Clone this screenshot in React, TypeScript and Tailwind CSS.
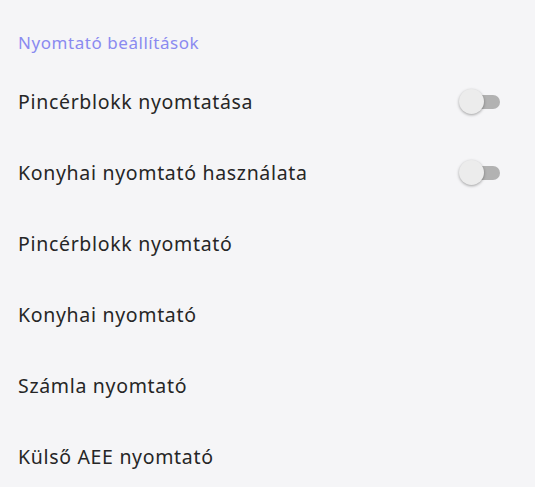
import { useState } from 'react'

interface PrefItem {
  title: string
  toggle?: boolean
}

const items: PrefItem[] = [
  { title: 'Pincérblokk nyomtatása', toggle: true },
  { title: 'Konyhai nyomtató használata', toggle: true },
  { title: 'Pincérblokk nyomtató' },
  { title: 'Konyhai nyomtató' },
  { title: 'Számla nyomtató' },
  { title: 'Külső AEE nyomtató' },
]

function Switch({ on, onChange }: { on: boolean; onChange: () => void }) {
  return (
    <button onClick={onChange} className="relative h-[26px] w-[42px]">
      <span className="absolute left-[4px] right-[1px] top-[6px] h-[14px] rounded-full bg-[#b2b2b2]" />
      <span
        className={`absolute top-0 h-[25px] w-[25px] rounded-full bg-[#ececec] shadow-[0_1px_3px_rgba(0,0,0,0.35)] ${
          on ? 'left-[17px]' : 'left-0'
        }`}
      />
    </button>
  )
}

export default function App() {
  const [state, setState] = useState<Record<number, boolean>>({})

  return (
    <div className="min-h-[487px] w-full bg-[#f5f5f7] font-['Noto_Sans',sans-serif]">
      <div className="px-[18px] pb-[11px] pt-[31px] text-[17px] leading-[24px] tracking-[0.55px] text-[#8a8af0]">
        Nyomtató beállítások
      </div>
      {items.map((item, i) => (
        <div key={item.title} className="flex h-[71px] items-center justify-between pl-[18px] pr-[34px]">
          <span className="text-[19.5px] tracking-[0.68px] text-[#262626]">{item.title}</span>
          {item.toggle && (
            <Switch on={!!state[i]} onChange={() => setState((s) => ({ ...s, [i]: !s[i] }))} />
          )}
        </div>
      ))}
    </div>
  )
}
